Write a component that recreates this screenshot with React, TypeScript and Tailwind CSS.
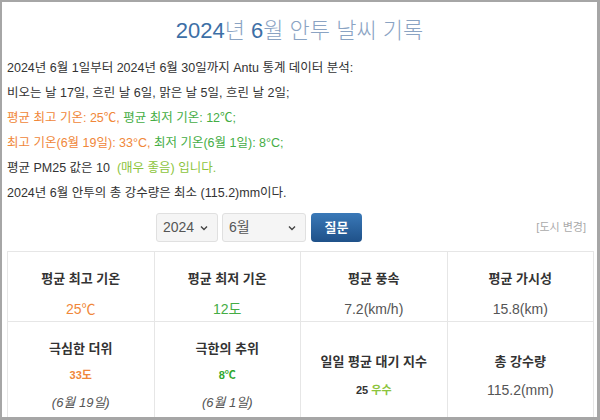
import React from "react";

const font = { fontFamily: '"Liberation Sans", Arial, "Noto Sans CJK KR", sans-serif' };

function Chevron() {
  return (
    <svg width="10" height="10" viewBox="0 0 10 10" className="absolute right-[8px] top-1/2 -translate-y-1/2">
      <path d="M2 3.5 L5 6.5 L8 3.5" fill="none" stroke="#444" strokeWidth="1.4" />
    </svg>
  );
}

export default function App() {
  return (
    <div
      className="w-[600px] h-[420px] overflow-hidden bg-white border-[#a6a6a6] border-l-2 border-t-2 border-r-[3px] border-b-[3px] text-[#333] text-[13px]"
      style={font}
    >
      <div className="px-[5px]">
        <div className="h-[54px] flex items-center justify-center text-[22px] text-[#3d6fa6] pt-[2px]">
          <span>2024</span>
          <span className="text-[#8aa3c3] font-light">년 </span>
          <span>&nbsp;6</span>
          <span className="text-[#8aa3c3] font-light">월 안투 날씨 기록</span>
        </div>
        <div className="text-[12.5px]">
          <div className="h-[25px] leading-[25px]">2024년 6월 1일부터 2024년 6월 30일까지 Antu 통계 데이터 분석:</div>
          <div className="h-[25px] leading-[25px]">비오는 날 17일, 흐린 날 6일, 맑은 날 5일, 흐린 날 2일;</div>
          <div className="h-[25px] leading-[25px]">
            <span className="text-[#f0873a]">평균 최고 기온: 25℃, </span>
            <span className="text-[#45ad45]">평균 최저 기온: 12℃;</span>
          </div>
          <div className="h-[25px] leading-[25px]">
            <span className="text-[#f0873a]">최고 기온(6월 19일): 33°C, </span>
            <span className="text-[#45ad45]">최저 기온(6월 1일): 8°C;</span>
          </div>
          <div className="h-[25px] leading-[25px]">
            평균 PM25 값은 10 <span className="text-[#8cc43c]">&nbsp;(매우 좋음) 입니다.</span>
          </div>
          <div className="h-[25px] leading-[25px]">2024년 6월 안투의 총 강수량은 최소 (115.2)mm이다.</div>
        </div>

        <div className="h-[45px] flex items-start pt-[7px]">
          <div className="ml-[149px] flex gap-[4px]">
            <div className="relative w-[62px] h-[29px] rounded-[3px] border border-[#e0e0e0] bg-[#f5f5f5] text-[14px] text-[#555] leading-[27px] pl-[6px]">
              2024
              <Chevron />
            </div>
            <div className="relative w-[84px] h-[29px] rounded-[3px] border border-[#e0e0e0] bg-[#f5f5f5] text-[14px] text-[#555] leading-[27px] pl-[6px]">
              6월
              <Chevron />
            </div>
            <div className="ml-[1px] w-[51px] h-[29px] rounded-[4px] bg-gradient-to-b from-[#3a79b8] to-[#1f5189] text-white font-bold text-[13px] flex items-center justify-center">
              질문
            </div>
          </div>
          <div className="ml-auto mr-[6px] h-[29px] flex items-center text-[11px] text-[#aaa]">[도시 변경]</div>
        </div>

        <div className="grid grid-cols-4 border-l border-t border-[#e6e6e6] w-[587px]">
          {[
            { h: "평균 최고 기온", v: "25℃", c: "text-[#f0873a]" },
            { h: "평균 최저 기온", v: "12도", c: "text-[#45ad45]" },
            { h: "평균 풍속", v: "7.2(km/h)", c: "text-[#555]" },
            { h: "평균 가시성", v: "15.8(km)", c: "text-[#555]" },
          ].map((x) => (
            <div key={x.h} className="h-[70px] border-r border-b border-[#e6e6e6] flex flex-col items-center">
              <div className="mt-[17px] leading-[20px] font-bold">{x.h}</div>
              <div className={"mt-[10px] leading-[20px] text-[14px] " + x.c}>{x.v}</div>
            </div>
          ))}
          <div className="h-[108px] border-r border-b border-[#e6e6e6] flex flex-col items-center justify-center">
            <div className="h-[27px] leading-[27px] font-bold">극심한 더위</div>
            <div className="h-[27px] leading-[27px] font-bold text-[11px] text-[#f0873a]">33도</div>
            <div className="h-[27px] leading-[27px] italic text-[#555]">(6월 19일)</div>
          </div>
          <div className="h-[108px] border-r border-b border-[#e6e6e6] flex flex-col items-center justify-center">
            <div className="h-[27px] leading-[27px] font-bold">극한의 추위</div>
            <div className="h-[27px] leading-[27px] font-bold text-[11px] text-[#2fa82f]">8℃</div>
            <div className="h-[27px] leading-[27px] italic text-[#555]">(6월 1일)</div>
          </div>
          <div className="h-[108px] border-r border-b border-[#e6e6e6] flex flex-col items-center justify-center">
            <div className="h-[29px] leading-[29px] font-bold">일일 평균 대기 지수</div>
            <div className="h-[29px] leading-[29px] font-bold text-[11px]">
              25 <span className="text-[#8cc43c]">우수</span>
            </div>
          </div>
          <div className="h-[108px] border-r border-b border-[#e6e6e6] flex flex-col items-center justify-center">
            <div className="h-[29px] leading-[29px] font-bold">총 강수량</div>
            <div className="h-[29px] leading-[29px] text-[14px] text-[#555]">115.2(mm)</div>
          </div>
        </div>
      </div>
    </div>
  );
}
